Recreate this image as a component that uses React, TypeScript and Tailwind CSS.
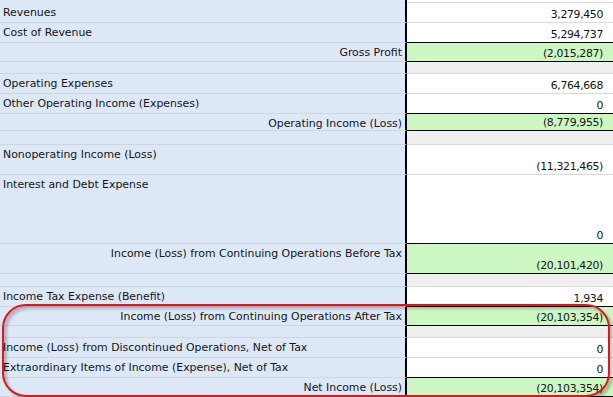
import React from 'react';

type Kind = 'data' | 'total' | 'blank';

interface Row {
    label?: string;
    right?: boolean;
    value?: string;
    h: string;
    kind: Kind;
    black?: boolean; // black line under the value cell
}

const rows: Row[] = [
    { h: 'h-[3px]', kind: 'data' },
    { label: 'Revenues', value: '3,279,450', h: 'h-[20px]', kind: 'data' },
    { label: 'Cost of Revenue', value: '5,294,737', h: 'h-[20px]', kind: 'data', black: true },
    { label: 'Gross Profit', right: true, value: '(2,015,287)', h: 'h-[19px]', kind: 'total', black: true },
    { h: 'h-[12px]', kind: 'blank' },
    { label: 'Operating Expenses', value: '6,764,668', h: 'h-[20px]', kind: 'data' },
    { label: 'Other Operating Income (Expenses)', value: '0', h: 'h-[20px]', kind: 'data', black: true },
    { label: 'Operating Income (Loss)', right: true, value: '(8,779,955)', h: 'h-[17px]', kind: 'total', black: true },
    { h: 'h-[14px]', kind: 'blank' },
    { label: 'Nonoperating Income (Loss)', value: '(11,321,465)', h: 'h-[30px]', kind: 'data' },
    { label: 'Interest and Debt Expense', value: '0', h: 'h-[69px]', kind: 'data', black: true },
    { label: 'Income (Loss) from Continuing Operations Before Tax', right: true, value: '(20,101,420)', h: 'h-[30px]', kind: 'total', black: true },
    { h: 'h-[13px]', kind: 'blank' },
    { label: 'Income Tax Expense (Benefit)', value: '1,934', h: 'h-[20px]', kind: 'data', black: true },
    { label: 'Income (Loss) from Continuing Operations After Tax', right: true, value: '(20,103,354)', h: 'h-[19px]', kind: 'total', black: true },
    { h: 'h-[12px]', kind: 'blank' },
    { label: 'Income (Loss) from Discontinued Operations, Net of Tax', value: '0', h: 'h-[20px]', kind: 'data' },
    { label: 'Extraordinary Items of Income (Expense), Net of Tax', value: '0', h: 'h-[20px]', kind: 'data', black: true },
    { label: 'Net Income (Loss)', right: true, value: '(20,103,354)', h: 'h-[19px]', kind: 'total', black: true },
];

const App: React.FC = () => {
    return (
        <div
            className="relative w-[613px] h-[397px] overflow-hidden bg-white text-[#141414] text-[10.9px] leading-[13px]"
            style={{ fontFamily: '"DejaVu Sans", Verdana, sans-serif' }}
        >
            {rows.map((r, i) => (
                <div key={i} className={`flex ${r.h}`}>
                    {/* label column */}
                    <div
                        className={`w-[407px] shrink-0 bg-[#dde8f7] border-b border-b-[#cfd6df] border-r-2 border-r-black pt-[3px] px-[3px] whitespace-nowrap ${
                            r.right ? 'text-right' : 'text-left'
                        }`}
                    >
                        {r.label}
                    </div>
                    {/* value column */}
                    <div
                        className={`flex-1 flex items-end justify-end pr-[10px] pb-[1px] border-b tracking-[-0.35px] ${
                            r.black ? 'border-black' : 'border-[#d9d9d9]'
                        } ${r.kind === 'total' ? 'bg-[#ccf6c2]' : r.kind === 'blank' ? 'bg-[#efefef]' : 'bg-white'}`}
                    >
                        {r.value}
                    </div>
                </div>
            ))}

            {/* red annotation round the last block */}
            <div className="absolute left-[2px] top-[304px] w-[608px] h-[93px] rounded-[24px] border-2 border-[#e3141c] shadow-[inset_3px_3px_3px_rgba(0,0,0,0.22),3px_3px_3px_rgba(0,0,0,0.22)] pointer-events-none" />
        </div>
    );
};

export default App;
